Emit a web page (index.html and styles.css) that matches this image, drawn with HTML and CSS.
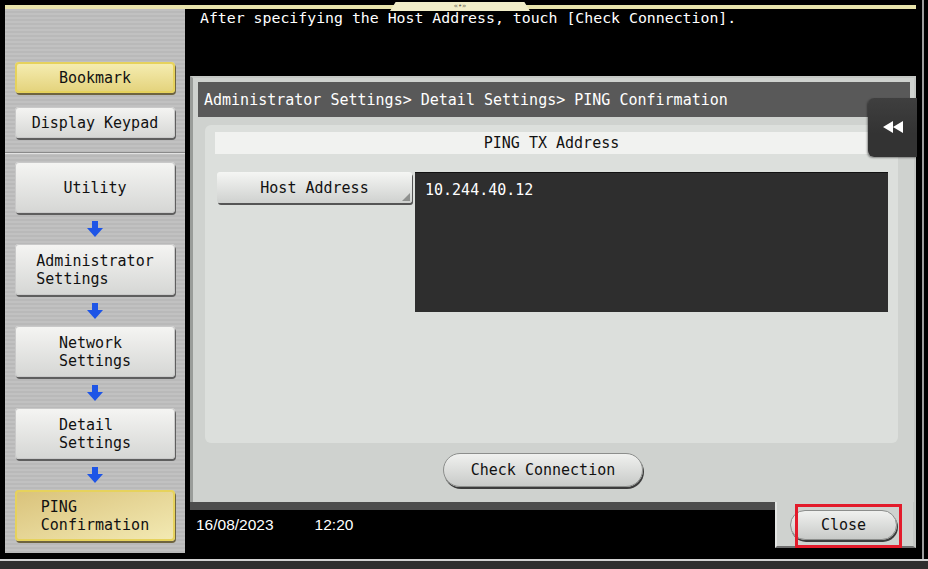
FILE: index.html
```html
<!doctype html>
<html lang="en">
<head>
    <meta charset="UTF-8">
    <title>PING Confirmation</title>

    <link rel="stylesheet" href="styles.css">
</head>
<body>

<div class="device">
    <div class="frame">
        <div class="screen">
            <div class="handle">&laquo;&bull;&raquo;</div>

            <aside class="sidebar">
                <div class="side-btn side-btn--yellow side-btn--short">Bookmark</div>
                <div class="side-btn side-btn--short side-btn--keypad">Display Keypad</div>
                <div class="side-sep"></div>

                <div class="side-btn"><span>Utility</span></div>
                <div class="side-arrow"><svg width="16" height="16" viewBox="0 0 16 16"><path d="M5 0h6v7h5l-8 9-8-9h5z"/></svg></div>
                <div class="side-btn"><span>Administrator<br>Settings</span></div>
                <div class="side-arrow"><svg width="16" height="16" viewBox="0 0 16 16"><path d="M5 0h6v7h5l-8 9-8-9h5z"/></svg></div>
                <div class="side-btn"><span>Network<br>Settings</span></div>
                <div class="side-arrow"><svg width="16" height="16" viewBox="0 0 16 16"><path d="M5 0h6v7h5l-8 9-8-9h5z"/></svg></div>
                <div class="side-btn"><span>Detail<br>Settings</span></div>
                <div class="side-arrow"><svg width="16" height="16" viewBox="0 0 16 16"><path d="M5 0h6v7h5l-8 9-8-9h5z"/></svg></div>
                <div class="side-btn side-btn--yellow side-btn--current"><span>PING<br>Confirmation</span></div>
            </aside>

            <main class="main">
                <div class="message">After specifying the Host Address, touch [Check Connection].</div>

                <section class="panel">
                    <div class="panel-title">Administrator Settings&gt; Detail Settings&gt; PING Confirmation</div>

                    <div class="content">
                        <div class="content-head">PING TX Address</div>
                        <div class="field-row">
                            <div class="host-btn">Host Address</div>
                            <div class="field">10.244.40.12</div>
                        </div>
                    </div>

                    <div class="actions">
                        <div class="pill pill--check">Check Connection</div>
                    </div>

                    <div class="collapse-tab">
                        <svg width="20" height="12" viewBox="0 0 20 12"><path d="M0 6l10-6v12zM10 6l10-6v12z" fill="#fff"/></svg>
                    </div>
                </section>

                <div class="footer">
                    <div class="status">
                        <span>16/08/2023</span>
                        <span>12:20</span>
                    </div>
                    <div class="close-tab">
                        <div class="pill pill--close">Close</div>
                        <div class="highlight"></div>
                    </div>
                </div>
            </main>
        </div>
    </div>
    <div class="bottom-line"></div>
</div>

</body>
</html>
```

FILE: styles.css
```css
* {
    margin: 0;
    padding: 0;
}

body {
    background: #000;
    font-family: "DejaVu Sans Mono", monospace;
    font-size: 15px;
    color: #111;
}

.device {
    width: 928px;
    height: 569px;
    overflow: hidden;
    background: #000;
}

.frame {
    width: 924px;
    height: 559px;
    box-sizing: border-box;
    padding: 5px 0 0 5px;
    border-right: 2px solid #9c9c9c;
}

.bottom-line {
    height: 8px;
    border-top: 2px solid #d2d2d2;
    background: #2e2e2e;
}

.screen {
    position: relative;
    display: flex;
    gap: 2px;
    width: 911px;
    height: 550px;
    box-sizing: border-box;
    border-top: 4px solid #e8e3ab;
}

.handle {
    position: absolute;
    left: 385px;
    top: -7px;
    width: 140px;
    height: 9px;
    background: #f1edc8;
    clip-path: polygon(4% 0, 96% 0, 100% 100%, 0 100%);
    font-size: 7px;
    line-height: 8px;
    text-align: center;
    color: #6d6a55;
}

/* sidebar */

.sidebar {
    display: flex;
    flex-direction: column;
    width: 180px;
    height: 544px;
    box-sizing: border-box;
    padding-top: 53px;
    background: repeating-linear-gradient(to bottom, #c1c1c1 0, #c1c1c1 2px, #b9b9b9 2px, #b9b9b9 4px);
}

.side-btn {
    display: flex;
    align-items: center;
    justify-content: center;
    height: 51px;
    margin: 0 10px;
    border-radius: 4px;
    background: linear-gradient(to bottom, #f5f5f3, #d5d6d4);
    box-shadow: 1px 2px 0 #5e5e5e, inset 0 0 0 1px #c9c9c9;
    line-height: 18px;
}

.side-btn span {
    display: inline-block;
    text-align: left;
}

.side-btn--short {
    height: 31px;
}

.side-btn--keypad {
    margin-top: 14px;
}

.side-btn--yellow {
    background: linear-gradient(to bottom, #f6eeb4, #e3d27a);
    box-shadow: 1px 2px 0 #6e6440, inset 0 0 0 2px #e6d25c;
}

.side-btn--current {
    background: linear-gradient(to bottom right, #d9c27a, #f3eab4);
}

.side-sep {
    height: 1px;
    margin: 14px 0 8px;
    background: #8a8a8a;
    border-bottom: 1px solid #e2e2e2;
}

.side-arrow {
    display: flex;
    align-items: center;
    justify-content: center;
    height: 31px;
}

.side-arrow svg {
    fill: #1e55e6;
}

/* main column */

.main {
    display: flex;
    flex-direction: column;
    width: 729px;
}

.message {
    height: 67px;
    padding-left: 13px;
    color: #fff;
    font-size: 14.85px;
    line-height: 18px;
}

.panel {
    position: relative;
    height: 426px;
    margin-left: 3px;
    box-sizing: border-box;
    padding: 4px 4px 0 5px;
    background: #cfd2cf;
    border: 2px solid #c4c7c4;
    border-left: 3px solid #9a9d9a;
    border-bottom: 0;
}

.panel-title {
    height: 35px;
    padding-left: 6px;
    background: #595959;
    color: #fff;
    line-height: 36px;
}

.content {
    height: 318px;
    margin: 8px 12px 0 7px;
    box-sizing: border-box;
    padding: 7px 10px 0;
    border-radius: 6px;
    background: #dcdfdc;
}

.content-head {
    height: 22px;
    line-height: 23px;
    background: #f1f2f0;
    text-align: center;
}

.field-row {
    display: flex;
    gap: 3px;
    margin-top: 18px;
    padding-left: 2px;
}

.host-btn {
    position: relative;
    width: 195px;
    height: 31px;
    border-radius: 3px;
    background: linear-gradient(to bottom, #f5f6f4, #cfd1cf);
    box-shadow: 1px 2px 0 #555;
    line-height: 32px;
    text-align: center;
}

.host-btn::after {
    content: "";
    position: absolute;
    right: 2px;
    bottom: 2px;
    border-left: 8px solid transparent;
    border-bottom: 8px solid #8f918f;
}

.field {
    width: 473px;
    height: 140px;
    box-sizing: border-box;
    padding: 8px 10px;
    background: #2e2e2e;
    border-top: 1px solid #111;
    color: #fff;
    line-height: 18px;
}

.actions {
    display: flex;
    justify-content: center;
    margin-top: 10px;
    padding-right: 22px;
}

.pill {
    box-sizing: border-box;
    border: 1px solid #8c8e8c;
    background: linear-gradient(to bottom, #f0f1ef, #c8cac8);
    box-shadow: 1px 2px 0 #3c3c3c;
    text-align: center;
}

.pill--check {
    width: 200px;
    height: 34px;
    border-radius: 17px;
    line-height: 32px;
}

.collapse-tab {
    position: absolute;
    top: 20px;
    right: -3px;
    width: 49px;
    height: 59px;
    box-sizing: border-box;
    padding: 23px 0 0 15px;
    border-radius: 6px 0 0 6px;
    background: linear-gradient(to bottom, #3f3f3f, #333 60%);
    box-shadow: -1px 1px 2px rgba(0, 0, 0, 0.4);
}

.collapse-tab svg {
    display: block;
}

/* footer */

.footer {
    display: flex;
    height: 53px;
    margin-left: 3px;
}

.status {
    display: flex;
    gap: 41px;
    flex: 1;
    padding: 7px 0 0 6px;
    border-top: 8px solid #4d4d4d;
    background: #000;
    color: #fff;
    font-family: "Liberation Sans", Arial, sans-serif;
    font-size: 15.5px;
    line-height: 16px;
}

.close-tab {
    position: relative;
    width: 141px;
    height: 46px;
    box-sizing: border-box;
    padding: 8px 0 0 13px;
    background: #cfd2cf;
    border-left: 2px solid #e4e6e4;
    border-right: 3px solid #c4c7c4;
    border-bottom: 2px solid #6e6e6e;
}

.pill--close {
    width: 107px;
    height: 30px;
    border-radius: 15px;
    line-height: 28px;
}

.highlight {
    position: absolute;
    left: 18px;
    top: 2px;
    width: 107px;
    height: 44px;
    box-sizing: border-box;
    border: 3px solid #e31b2b;
}
```
